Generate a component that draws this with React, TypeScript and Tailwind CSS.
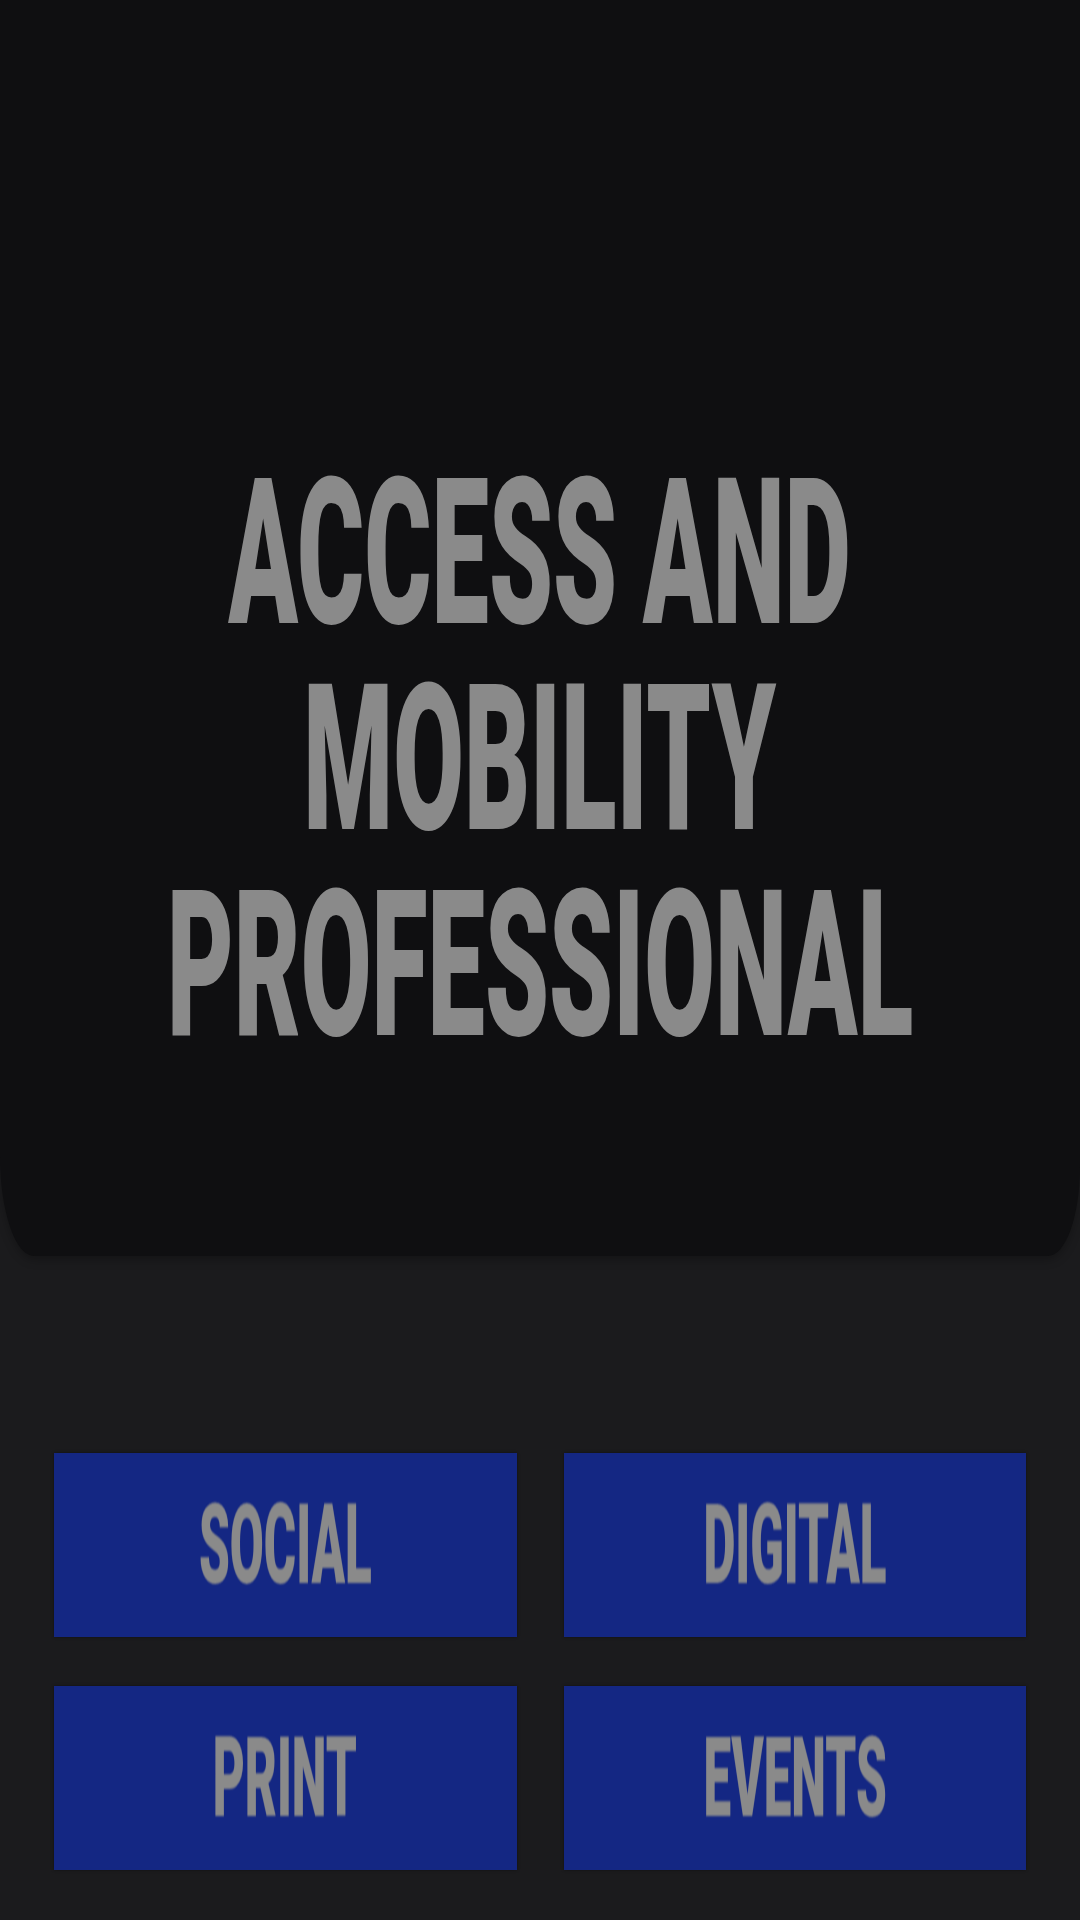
import React from "react"

const tiles = ["SOCIAL", "DIGITAL", "PRINT", "EVENTS"]

export default function App() {
  return (
    <div className="min-h-[1920px] w-[1080px] overflow-hidden bg-[#1b1b1d] flex flex-col" style={{ fontFamily: "Roboto, 'Liberation Sans', sans-serif" }}>
      {/* Hero */}
      <div className="h-[1256px] overflow-hidden bg-[#0f0f11] rounded-bl-[34px_100px] rounded-br-[32px_90px] shadow-[0_4px_10px_rgba(0,0,0,0.25)] flex flex-col items-center pt-[450px]">
        <h1 className="w-full flex flex-col items-center text-[205px] leading-[206px] font-black text-[#8a8a8a] uppercase">
          <span className="scale-x-[0.5] whitespace-nowrap">ACCESS AND</span>
          <span className="scale-x-[0.5] whitespace-nowrap">MOBILITY</span>
          <span className="scale-x-[0.5] whitespace-nowrap">PROFESSIONAL</span>
        </h1>
      </div>

      {/* Tiles */}
      <div className="grid grid-cols-2 gap-x-[47px] gap-y-[49px] px-[54px] pt-[197px]">
        {tiles.map((t) => (
          <button key={t} className="h-[184px] overflow-hidden bg-[#142783] flex items-center justify-center shadow-[0_0_3px_rgba(0,0,0,0.4)]">
            <span className="text-[112px] leading-none font-black text-[#8a8a8a] scale-x-[0.44] whitespace-nowrap blur-[1px]">{t}</span>
          </button>
        ))}
      </div>
    </div>
  )
}
